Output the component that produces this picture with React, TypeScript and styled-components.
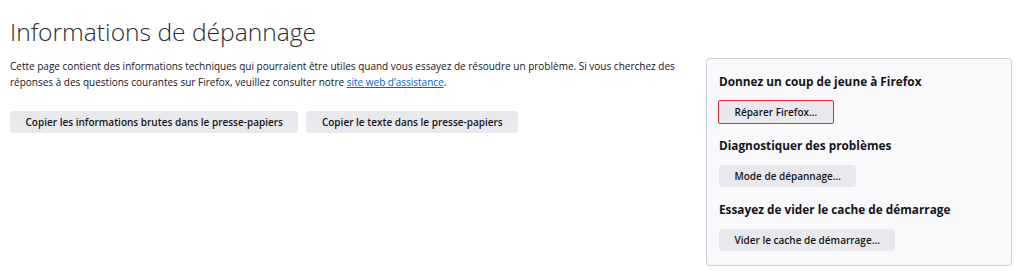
import styled, { createGlobalStyle } from 'styled-components';

const GlobalStyle = createGlobalStyle`
  body {
    margin: 0;
    background: #ffffff;
    color: #15141a;
    font-family: 'Open Sans', 'Noto Sans', sans-serif;
  }
`;

type Action = {
  title: string;
  label: string;
  highlighted?: boolean;
};

const actions: Action[] = [
  { title: 'Donnez un coup de jeune à Firefox', label: 'Réparer Firefox…', highlighted: true },
  { title: 'Diagnostiquer des problèmes', label: 'Mode de dépannage…' },
  { title: 'Essayez de vider le cache de démarrage', label: 'Vider le cache de démarrage…' },
];

const App = () => {
  return (
    <>
      <GlobalStyle />
      <Page>
        <MainColumn>
          <PageTitle>Informations de dépannage</PageTitle>
          <Intro>
            Cette page contient des informations techniques qui pourraient être utiles quand vous essayez de
            résoudre un problème. Si vous cherchez des
            <br />
            réponses à des questions courantes sur Firefox, veuillez consulter notre{' '}
            <IntroLink href="#">site web d’assistance</IntroLink>.
          </Intro>
          <CopyRow>
            <ActionButton>Copier les informations brutes dans le presse-papiers</ActionButton>
            <ActionButton>Copier le texte dans le presse-papiers</ActionButton>
          </CopyRow>
        </MainColumn>
        <ActionBox>
          {actions.map((action) => (
            <ActionSection key={action.title}>
              <ActionTitle>{action.title}</ActionTitle>
              <ActionButton highlighted={action.highlighted}>{action.label}</ActionButton>
            </ActionSection>
          ))}
        </ActionBox>
      </Page>
    </>
  );
};

const Page = styled.div`
  display: flex;
  align-items: flex-start;
  padding: 17px 12px 0 10px;
  gap: 16px;
`;

const MainColumn = styled.div`
  flex: 1;
  min-width: 0;
  display: flex;
  flex-direction: column;
  align-items: flex-start;
`;

const PageTitle = styled.h1`
  margin: 0;
  font-size: 24.6px;
  line-height: 30px;
  font-weight: 300;
  color: #2b2a33;
`;

const Intro = styled.p`
  margin: 11px 0 0;
  font-size: 10px;
  line-height: 16px;
  white-space: nowrap;
`;

const IntroLink = styled.a`
  color: #0061e0;
  text-decoration: underline;
`;

const CopyRow = styled.div`
  display: flex;
  gap: 8px;
  margin-top: 21px;
`;

const ActionButton = styled.button<{ highlighted?: boolean }>`
  height: 22px;
  padding: 0 15.5px;
  border: none;
  border-radius: ${(p) => (p.highlighted ? '1px' : '4px')};
  background: #e9e9ed;
  color: #15141a;
  font-family: inherit;
  font-size: 10px;
  font-weight: 600;
  cursor: pointer;
  outline: ${(p) => (p.highlighted ? '1.5px solid #e8262d' : 'none')};
  outline-offset: 0.5px;
`;

const ActionBox = styled.aside`
  flex: 0 0 auto;
  width: 279px;
  margin-top: 41px;
  padding: 13px 13px 14px 12px;
  border: 1px solid #cfcfd8;
  border-radius: 4px;
  background: #f9f9fb;
  box-shadow: 0 1px 2px rgba(0, 0, 0, 0.08);
  display: flex;
  flex-direction: column;
  gap: 13px;
`;

const ActionSection = styled.section`
  display: flex;
  flex-direction: column;
  align-items: flex-start;
  gap: 11px;
`;

const ActionTitle = styled.h3`
  margin: 0;
  font-size: 11.8px;
  line-height: 18px;
  font-weight: 700;
`;

export default App;
